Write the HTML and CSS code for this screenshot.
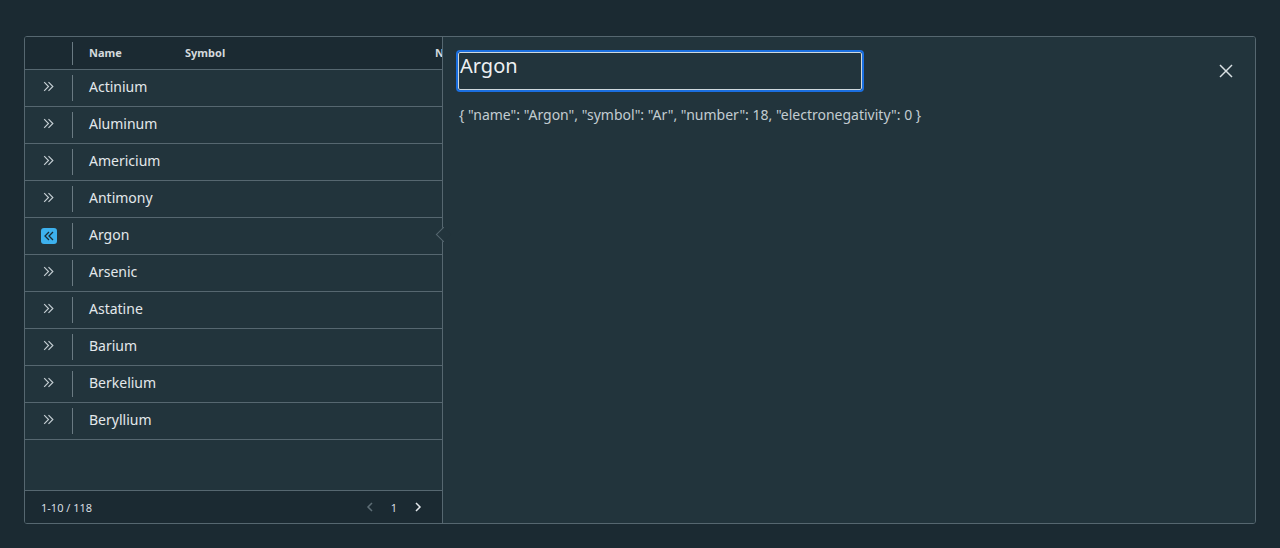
FILE: index.html
```html
<!DOCTYPE html>
<html>
<head>
<meta charset="utf-8">
<link rel="stylesheet" href="styles.css">
</head>
<body>
<div class="frame">
  <div class="grid">
    <div class="head">
      <div class="c-exp"><span class="sep"></span></div>
      <div class="c-name">Name</div>
      <div class="c-sym">Symbol</div>
      <div class="c-num">Number</div>
    </div>
    <div class="rows">
      <div class="row"><div class="c-exp"><svg class="chev" viewBox="0 0 12 12"><polyline points="2,2 6,6 2,10"/><polyline points="6,2 10,6 6,10"/></svg><span class="sep"></span></div><div class="c-name">Actinium</div></div>
      <div class="row"><div class="c-exp"><svg class="chev" viewBox="0 0 12 12"><polyline points="2,2 6,6 2,10"/><polyline points="6,2 10,6 6,10"/></svg><span class="sep"></span></div><div class="c-name">Aluminum</div></div>
      <div class="row"><div class="c-exp"><svg class="chev" viewBox="0 0 12 12"><polyline points="2,2 6,6 2,10"/><polyline points="6,2 10,6 6,10"/></svg><span class="sep"></span></div><div class="c-name">Americium</div></div>
      <div class="row"><div class="c-exp"><svg class="chev" viewBox="0 0 12 12"><polyline points="2,2 6,6 2,10"/><polyline points="6,2 10,6 6,10"/></svg><span class="sep"></span></div><div class="c-name">Antimony</div></div>
      <div class="row"><div class="c-exp"><span class="sel"><svg class="chev dark" viewBox="0 0 12 12"><polyline points="6,2 2,6 6,10"/><polyline points="10,2 6,6 10,10"/></svg></span><span class="sep"></span></div><div class="c-name">Argon</div></div>
      <div class="row"><div class="c-exp"><svg class="chev" viewBox="0 0 12 12"><polyline points="2,2 6,6 2,10"/><polyline points="6,2 10,6 6,10"/></svg><span class="sep"></span></div><div class="c-name">Arsenic</div></div>
      <div class="row"><div class="c-exp"><svg class="chev" viewBox="0 0 12 12"><polyline points="2,2 6,6 2,10"/><polyline points="6,2 10,6 6,10"/></svg><span class="sep"></span></div><div class="c-name">Astatine</div></div>
      <div class="row"><div class="c-exp"><svg class="chev" viewBox="0 0 12 12"><polyline points="2,2 6,6 2,10"/><polyline points="6,2 10,6 6,10"/></svg><span class="sep"></span></div><div class="c-name">Barium</div></div>
      <div class="row"><div class="c-exp"><svg class="chev" viewBox="0 0 12 12"><polyline points="2,2 6,6 2,10"/><polyline points="6,2 10,6 6,10"/></svg><span class="sep"></span></div><div class="c-name">Berkelium</div></div>
      <div class="row"><div class="c-exp"><svg class="chev" viewBox="0 0 12 12"><polyline points="2,2 6,6 2,10"/><polyline points="6,2 10,6 6,10"/></svg><span class="sep"></span></div><div class="c-name">Beryllium</div></div>
    </div>
    <div class="spacer"></div>
    <div class="foot">
      <span class="count">1-10 / 118</span>
      <div class="pager">
        <svg class="pg off" viewBox="0 0 12 12"><polyline points="8,2 4,6 8,10"/></svg>
        <span class="page">1</span>
        <svg class="pg" viewBox="0 0 12 12"><polyline points="4,2 8,6 4,10"/></svg>
      </div>
    </div>
  </div>
  <div class="pane">
    <span class="caret"></span>
    <div class="pane-head">
      <div class="title">Argon</div>
      <svg class="close" viewBox="0 0 16 16"><line x1="2" y1="2" x2="14" y2="14"/><line x1="14" y1="2" x2="2" y2="14"/></svg>
    </div>
    <div class="json">{ "name": "Argon", "symbol": "Ar", "number": 18, "electronegativity": 0 }</div>
  </div>
</div>
</body>
</html>
```

FILE: styles.css
```css
html, body {
  margin: 0;
  padding: 0;
  background: #1b2a32;
  font-family: "Noto Sans", "Liberation Sans", sans-serif;
  color: #e9ecef;
}
body {
  padding: 36px 24px 0 24px;
}
.frame {
  display: flex;
  height: 486px;
  border: 1px solid #566770;
  border-radius: 3px;
  overflow: hidden;
}
.grid {
  width: 417px;
  display: flex;
  flex-direction: column;
  background: #22343c;
  overflow: hidden;
  flex: none;
}
.head {
  height: 32px;
  flex: none;
  display: flex;
  align-items: center;
  background: #1b2a32;
  border-bottom: 1px solid #566770;
  font-size: 11px;
  font-weight: 700;
  color: #d3d9dc;
  white-space: nowrap;
}
.head .c-name, .head .c-sym, .head .c-num { padding-bottom: 2px; }
.c-exp {
  width: 48px;
  height: 100%;
  flex: none;
  position: relative;
  display: flex;
  align-items: center;
  justify-content: center;
  box-sizing: border-box;
  padding-right: 1px;
}
.sep {
  position: absolute;
  right: 0;
  top: 5px;
  bottom: 4px;
  width: 1px;
  background: #6a7a82;
}
.head .c-name { padding-left: 16px; width: 96px; flex: none; }
.head .c-sym { width: 250px; flex: none; }
.head .c-num { flex: none; }
.rows { display: flex; flex-direction: column; flex: none; }
.row {
  height: 36px;
  display: flex;
  align-items: center;
  border-bottom: 1px solid #566770;
  font-size: 14px;
}
.row .c-exp { padding-bottom: 3px; }
.row .sep { top: 5px; bottom: 5px; }
.row .c-name { padding-left: 16px; padding-bottom: 4px; color: #e3e8eb; }
.chev {
  width: 13px;
  height: 13px;
  fill: none;
  stroke: #c3ccd1;
  stroke-width: 1.1;
}
.chev.dark { stroke: #1b2a32; stroke-width: 1.3; width: 12px; height: 12px; }
.sel {
  width: 16px;
  height: 16px;
  border-radius: 3px;
  background: #3db1ee;
  display: flex;
  align-items: center;
  justify-content: center;
  margin-top: 2px;
}
.spacer { flex: 1; }
.foot {
  height: 32px;
  flex: none;
  border-top: 1px solid #566770;
  background: #1b2a32;
  display: flex;
  align-items: center;
  justify-content: space-between;
  padding: 0 18px 0 16px;
  font-size: 11px;
  color: #d8dee1;
}
.pager { display: flex; align-items: center; gap: 15px; }
.pg {
  width: 12px;
  height: 12px;
  fill: none;
  stroke: #e3e8eb;
  stroke-width: 1.5;
}
.pg.off { stroke: #5e6e76; }
.page { font-size: 11px; }
.pane {
  flex: 1;
  position: relative;
  background: #22343c;
  border-left: 1px solid #566770;
  padding: 13px 21px 0 13px;
}
.caret {
  position: absolute;
  left: -5px;
  top: 192px;
  width: 10px;
  height: 10px;
  background: #22343c;
  border-left: 1px solid #566770;
  border-bottom: 1px solid #566770;
  transform: rotate(45deg);
}
.pane-head {
  display: flex;
  justify-content: space-between;
  align-items: center;
}
.title {
  width: 404px;
  height: 38px;
  border: 1px solid #cfd8dc;
  outline: 2px solid #1b6fe0;
  outline-offset: 0;
  margin: 2px;
  font-size: 20px;
  line-height: 26px;
  padding-left: 1px;
  color: #eef1f3;
  box-sizing: border-box;
  border-radius: 2px;
}
.close {
  width: 16px;
  height: 16px;
  fill: none;
  stroke: #d9e0e3;
  stroke-width: 1.5;
}
.json {
  margin-top: 13px;
  padding-left: 3px;
  font-size: 14px;
  color: #c3ccd1;
}
```
